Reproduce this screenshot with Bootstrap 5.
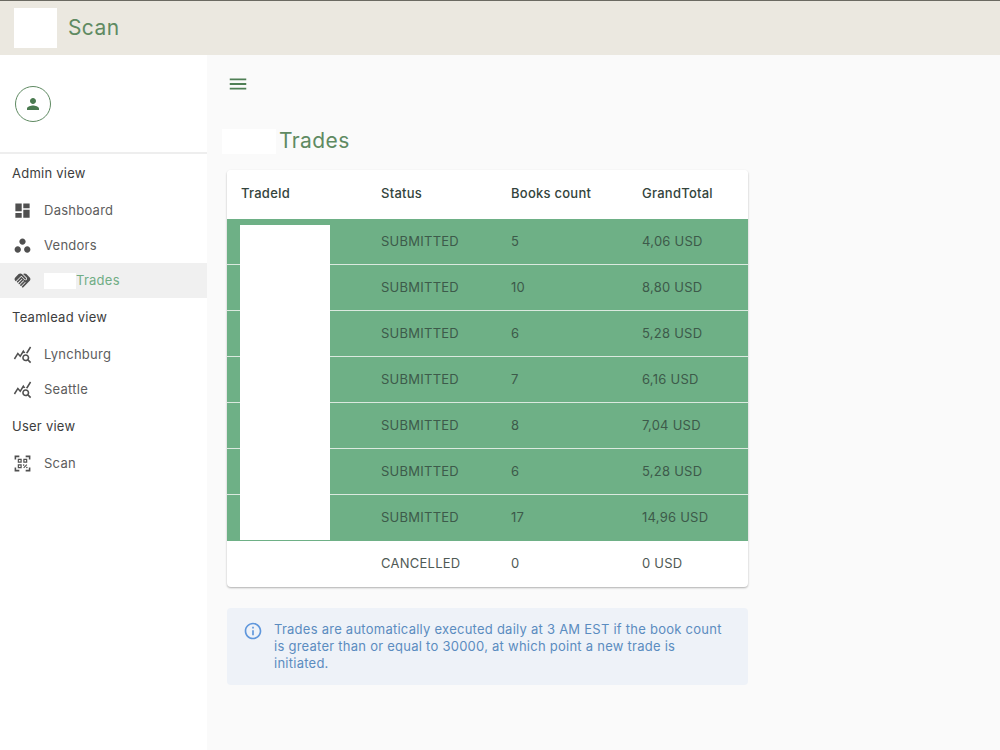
<!DOCTYPE html>
<html lang="en">
<head>
<meta charset="utf-8">
<title>Trades</title>
<link href="https://cdn.jsdelivr.net/npm/bootstrap@5.3.0/dist/css/bootstrap.min.css" rel="stylesheet">
<style>
html,body{height:100%}
body{font-family:"Inter","Noto Sans",sans-serif;font-size:13px;background:#fafafa;color:#3f4a45;overflow:hidden;letter-spacing:.25px}
.app-top{height:55px;background:#ebe8e0;border-top:1px solid #6b6a62;padding-left:14px;gap:11px}
.app-logo{width:43px;height:40px;background:#fff}
.app-name{font-size:21px;color:#5f8a62;font-weight:400;letter-spacing:.4px;margin:0}
.app-shell{height:695px}
.side{width:207px;background:#fff;flex:none}
.side-user{height:99px;padding-left:15px;border-bottom:2px solid #eeeeee}
.avatar{width:36px;height:36px;border:1px solid #5f8a62;border-radius:50%}
.avatar svg{width:18px;height:18px;fill:#4a7a50}
.side-head{font-size:13px;color:#3d3d3d;padding-left:12px;line-height:16px;font-weight:400}
.side-head.h1st{margin-top:11px;margin-bottom:12px}
.side-head.hnext{margin-top:11px;margin-bottom:12px}
.side-item{height:35px;padding-left:13px;color:#5d5d5d;gap:12px;font-size:13px;text-decoration:none}
.side-item svg{width:19px;height:19px;fill:#505050;flex:none}
.side-item.on{background:#f0f0f0;color:#70ad85;gap:0}
.side-item.on svg{margin-right:12px}
.hide-mini{width:32px;height:16px;background:#fff;display:inline-block}
.main-pane{padding:0 0 0 20px}
.menu-btn{background:none;border:0;padding:0;margin:18px 0 0 0;width:22px;height:22px;color:#5f8a62}
.menu-btn svg{width:22px;height:22px;fill:#4f7f55;display:block}
.page-head{margin-top:28px;margin-left:-5px;height:25px;gap:3px;margin-bottom:16px}
.hide-title{width:54px;height:25px;background:#fff}
.page-title{font-size:21px;color:#5f8a62;font-weight:400;margin:0;letter-spacing:.4px}
.trade-card{width:521px;background:#fff;border-radius:4px;box-shadow:0 1px 2px rgba(0,0,0,.3);position:relative;overflow:hidden}
.trade-table{margin:0;table-layout:fixed;width:521px;--bs-table-bg:transparent;font-size:13px}
.trade-table th,.trade-table td{padding:0 0 0 14px;vertical-align:middle;border:0;color:#3f4f48;box-shadow:none}
.trade-table th{height:49px;font-weight:500;color:#33443c;background:#fff}
.trade-table td{height:46px;font-weight:400;color:#3d5a4a}
.trade-table tr.row-ok td{background:#6eb086;border-bottom:1px solid #dbe9df}
.trade-table tr.row-ok:nth-last-child(2) td{border-bottom:0}
.trade-table tr.row-no td{color:#4f5a55}
.mask-id{position:absolute;left:13px;top:55px;width:90px;height:315px;background:#fff}
.note-box{width:521px;margin-top:21px;background:#eef2f8;border-radius:4px;padding:13px 16px;color:#5b8cc0;font-size:13px;line-height:17px;gap:11px}
.note-box svg{width:20px;height:20px;fill:#5f97dc;flex:none;margin-top:0}
</style>
</head>
<body>
<header class="app-top d-flex align-items-center">
  <div class="app-logo"></div>
  <h1 class="app-name">Scan</h1>
</header>
<div class="app-shell d-flex">
  <aside class="side">
    <div class="side-user d-flex align-items-center">
      <div class="avatar d-flex align-items-center justify-content-center">
        <svg viewBox="0 0 24 24"><path d="M12 12c2.21 0 4-1.79 4-4s-1.79-4-4-4-4 1.79-4 4 1.79 4 4 4zm0 2c-2.67 0-8 1.34-8 4v2h16v-2c0-2.66-5.33-4-8-4z"/></svg>
      </div>
    </div>
    <nav class="d-flex flex-column">
      <div class="side-head h1st">Admin view</div>
      <a class="side-item d-flex align-items-center" href="#"><svg viewBox="0 0 24 24"><path d="M3 13h8V3H3v10zm0 8h8v-6H3v6zm10 0h8V11h-8v10zm0-18v6h8V3h-8z"/></svg>Dashboard</a>
      <a class="side-item d-flex align-items-center" href="#"><svg viewBox="0 0 24 24"><path d="M6 13c-2.2 0-4 1.800-4 4s1.800 4 4 4 4-1.800 4-4-1.800-4-4-4zm6-10C9.800 3 8 4.800 8 7s1.800 4 4 4 4-1.800 4-4-1.800-4-4-4zm6 10c-2.200 0-4 1.800-4 4s1.800 4 4 4 4-1.800 4-4-1.800-4-4-4z"/></svg>Vendors</a>
      <a class="side-item on d-flex align-items-center" href="#"><svg viewBox="0 0 24 24"><path d="M16.48 10.410c-.39.39-1.040.39-1.430 0l-4.470-4.460-7.050 7.040-.66-.63c-1.170-1.170-1.170-3.070 0-4.240l4.240-4.240c1.170-1.170 3.070-1.170 4.240 0L16.480 9c.39.39.39 1.020 0 1.410zm.7-2.120c.78.78.78 2.050 0 2.830-1.270 1.270-2.610.22-2.830 0l-3.760-3.760-5.570 5.570c-.39.39-.39 1.020 0 1.410.39.39 1.020.39 1.420 0l4.620-4.620.71.71-4.620 4.620c-.39.39-.39 1.020 0 1.410.39.39 1.020.39 1.420 0l4.620-4.620.71.71-4.620 4.620c-.39.39-.39 1.020 0 1.410.39.39 1.020.39 1.410 0l4.620-4.620.71.71-4.620 4.620c-.39.39-.39 1.020 0 1.410.39.39 1.020.39 1.410 0l8.320-8.340c1.170-1.170 1.170-3.070 0-4.240l-4.240-4.240c-1.150-1.150-3.010-1.170-4.180-.06l4.470 4.470z"/></svg><span class="hide-mini"></span>Trades</a>
      <div class="side-head hnext">Teamlead view</div>
      <a class="side-item d-flex align-items-center" href="#"><svg viewBox="0 0 24 24"><path d="M19.880 18.470c.44-.7.7-1.510.7-2.390 0-2.490-2.010-4.500-4.500-4.500s-4.500 2.010-4.500 4.500 2.010 4.500 4.490 4.500c.88 0 1.700-.26 2.390-.7L21.580 23 23 21.580l-3.120-3.110zm-3.800.11c-1.380 0-2.500-1.120-2.500-2.500s1.120-2.500 2.500-2.500 2.500 1.120 2.500 2.500-1.120 2.500-2.500 2.500zm-.36-8.500c-.74.02-1.450.18-2.100.45l-.55-.83-3.800 6.180-3.010-3.520-3.630 5.810L1 17l5-8 3 3.500L13 6l2.720 4.080zm2.590.5c-.64-.28-1.330-.45-2.050-.49L21.380 2 23 3.180l-4.690 7.400z"/></svg>Lynchburg</a>
      <a class="side-item d-flex align-items-center" href="#"><svg viewBox="0 0 24 24"><path d="M19.880 18.470c.44-.7.7-1.510.7-2.390 0-2.490-2.010-4.500-4.500-4.500s-4.500 2.010-4.500 4.500 2.010 4.500 4.490 4.500c.88 0 1.700-.26 2.390-.7L21.580 23 23 21.580l-3.120-3.110zm-3.800.11c-1.380 0-2.500-1.120-2.500-2.500s1.120-2.500 2.500-2.500 2.500 1.120 2.500 2.500-1.120 2.500-2.500 2.500zm-.36-8.500c-.74.02-1.450.18-2.100.45l-.55-.83-3.800 6.180-3.010-3.520-3.630 5.810L1 17l5-8 3 3.500L13 6l2.720 4.080zm2.590.5c-.64-.28-1.330-.45-2.050-.49L21.380 2 23 3.180l-4.690 7.400z"/></svg>Seattle</a>
      <div class="side-head hnext">User view</div>
      <a class="side-item d-flex align-items-center" href="#"><svg viewBox="0 0 24 24"><path d="M2 2h6v2H4v3H2zM16 2h6v5h-2V4h-4zM2 17h2v3h4v2H2zM20 17h2v5h-6v-2h4zM6 6h5v5H6zm1.500 1.500v2h2v-2zM13 6h5v5h-5zm1.500 1.500v2h2v-2zM6 13h5v5H6zm1.500 1.500v2h2v-2zM17 13l1 1-4 4-1-1zM13.500 13a1 1 0 1 1 0 2 1 1 0 0 1 0-2zM17.500 16a1 1 0 1 1 0 2 1 1 0 0 1 0-2z"/></svg>Scan</a>
    </nav>
  </aside>
  <main class="main-pane flex-grow-1">
    <button class="menu-btn" type="button" aria-label="Menu"><svg viewBox="0 0 24 24"><path d="M3 18h18v-2H3v2zm0-5h18v-2H3v2zm0-7v2h18V6H3z"/></svg></button>
    <div class="page-head d-flex align-items-center">
      <div class="hide-title"></div>
      <h2 class="page-title">Trades</h2>
    </div>
    <div class="trade-card">
      <table class="table trade-table">
        <colgroup><col style="width:140px"><col style="width:130px"><col style="width:131px"><col style="width:120px"></colgroup>
        <thead><tr><th>TradeId</th><th>Status</th><th>Books count</th><th>GrandTotal</th></tr></thead>
        <tbody>
          <tr class="row-ok"><td></td><td>SUBMITTED</td><td>5</td><td>4,06 USD</td></tr>
          <tr class="row-ok"><td></td><td>SUBMITTED</td><td>10</td><td>8,80 USD</td></tr>
          <tr class="row-ok"><td></td><td>SUBMITTED</td><td>6</td><td>5,28 USD</td></tr>
          <tr class="row-ok"><td></td><td>SUBMITTED</td><td>7</td><td>6,16 USD</td></tr>
          <tr class="row-ok"><td></td><td>SUBMITTED</td><td>8</td><td>7,04 USD</td></tr>
          <tr class="row-ok"><td></td><td>SUBMITTED</td><td>6</td><td>5,28 USD</td></tr>
          <tr class="row-ok"><td></td><td>SUBMITTED</td><td>17</td><td>14,96 USD</td></tr>
          <tr class="row-no"><td></td><td>CANCELLED</td><td>0</td><td>0 USD</td></tr>
        </tbody>
      </table>
      <div class="mask-id"></div>
    </div>
    <div class="note-box d-flex">
      <svg viewBox="0 0 24 24"><path d="M11 7h2v2h-2zm0 4h2v6h-2zm1-9C6.480 2 2 6.480 2 12s4.480 10 10 10 10-4.480 10-10S17.520 2 12 2zm0 18c-4.410 0-8-3.590-8-8s3.590-8 8-8 8 3.590 8 8-3.590 8-8 8z"/></svg>
      <div>Trades are automatically executed daily at 3 AM EST if the book count is greater than or equal to 30000, at which point a new trade is initiated.</div>
    </div>
  </main>
</div>
<script src="https://cdn.jsdelivr.net/npm/bootstrap@5.3.0/dist/js/bootstrap.bundle.min.js"></script>
</body>
</html>
